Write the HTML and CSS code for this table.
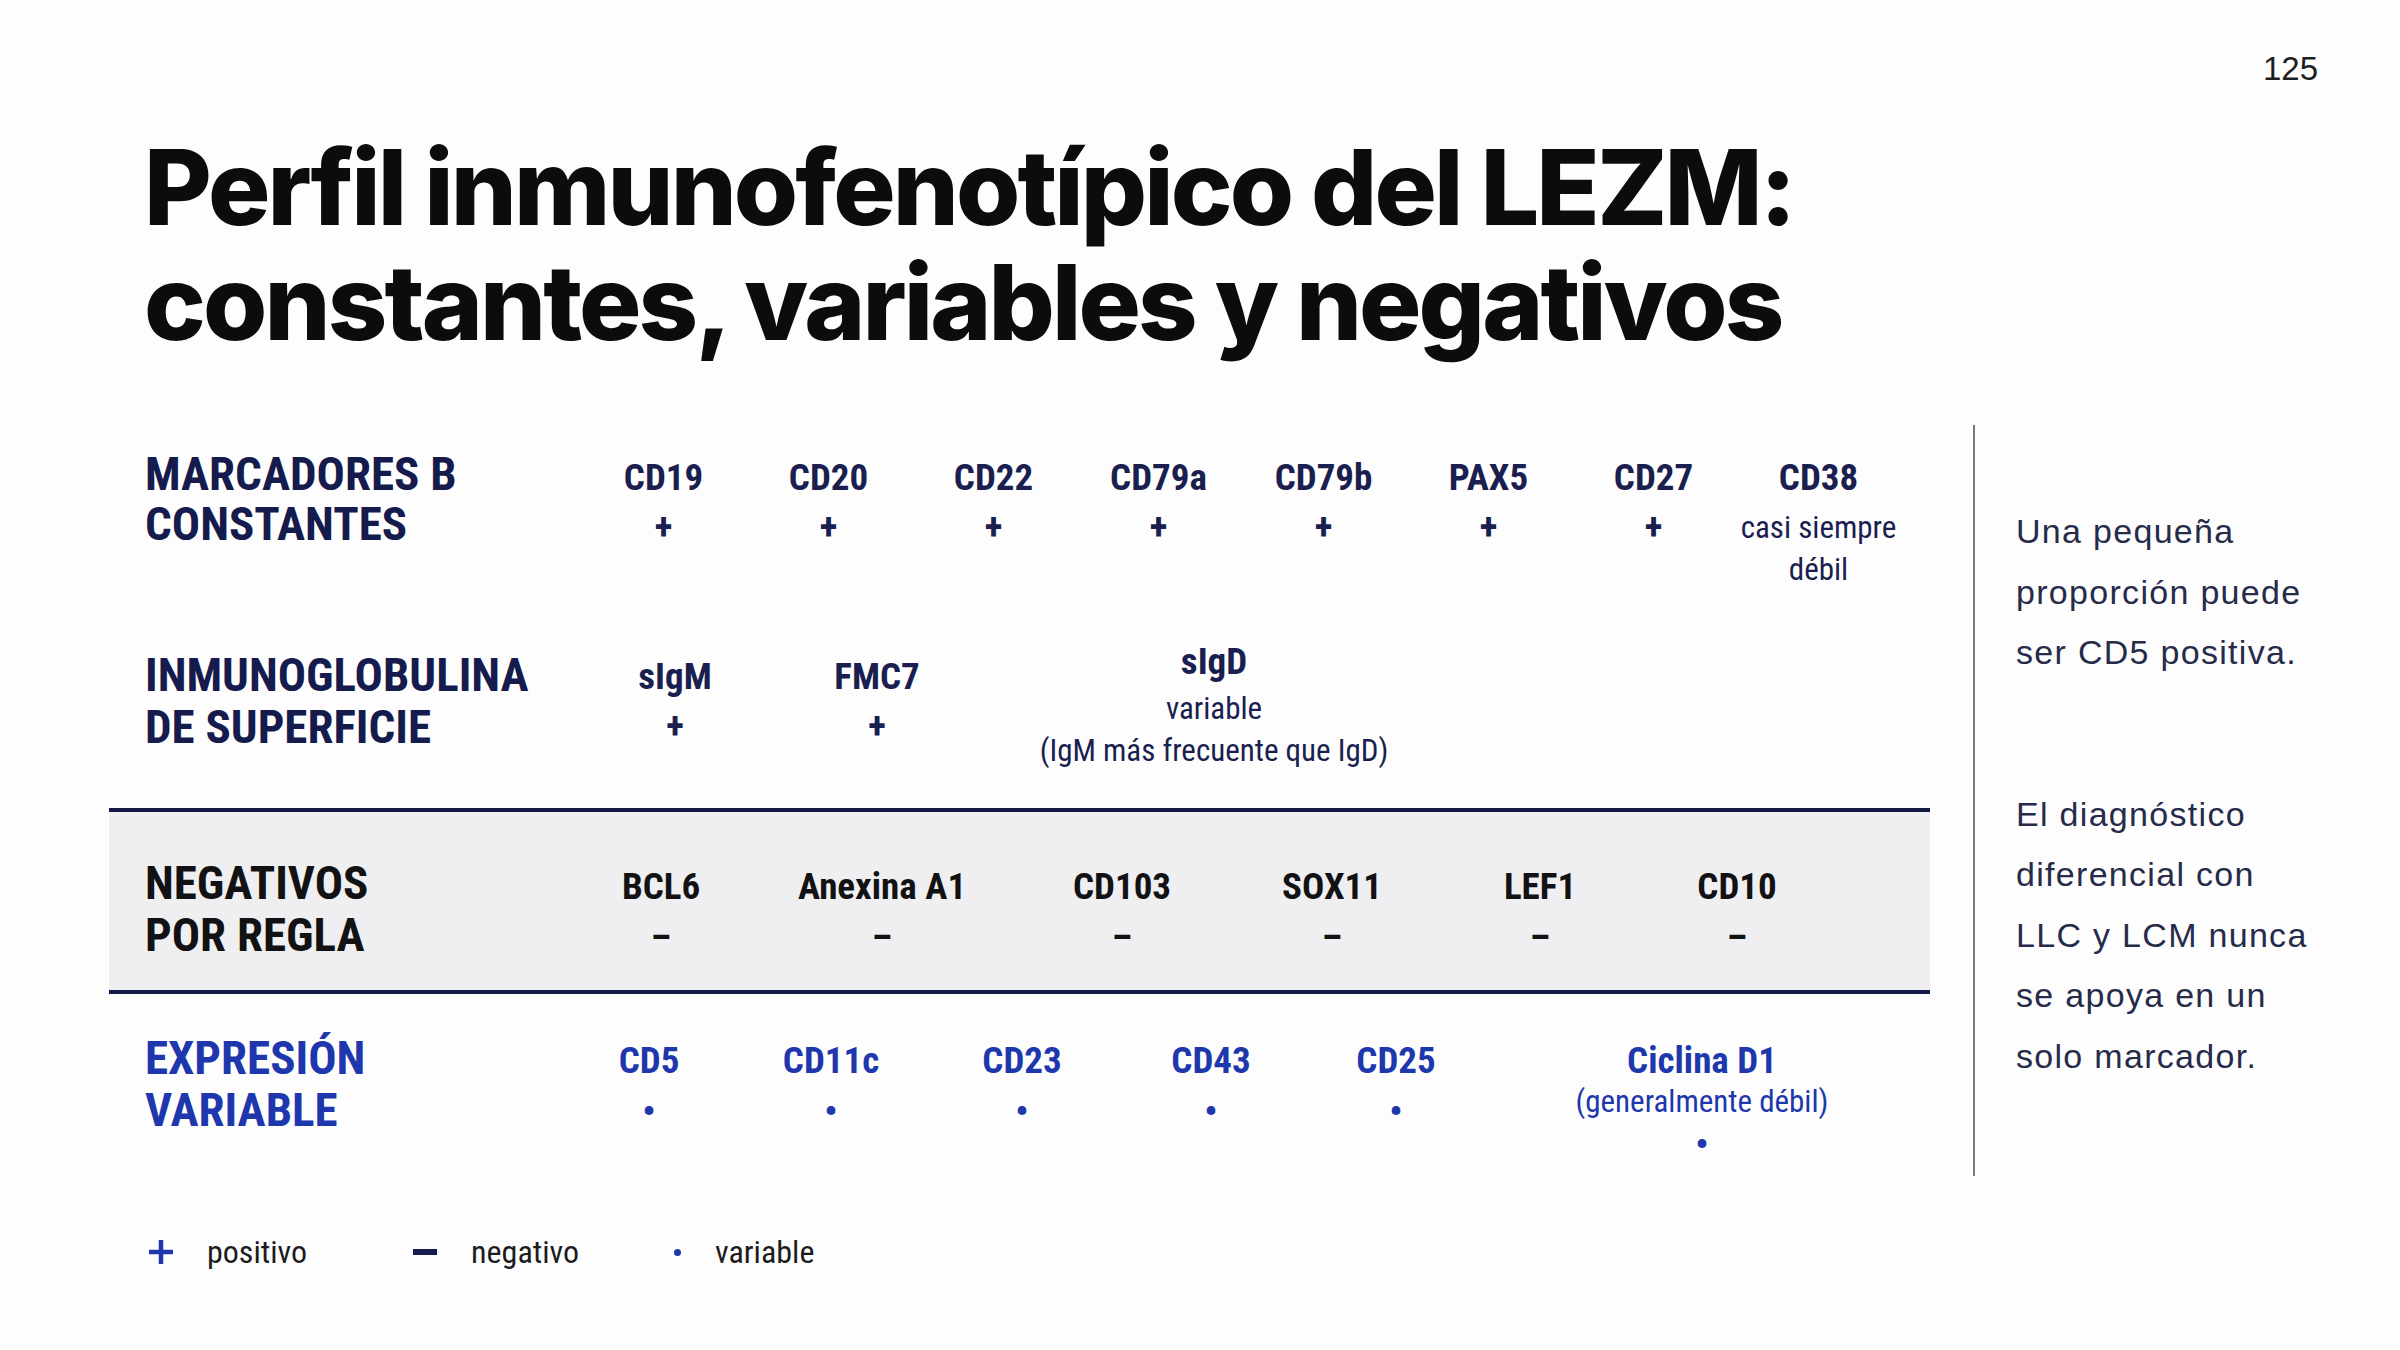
FILE: index.html
```html
<!DOCTYPE html>
<html lang="es">
<head>
<meta charset="utf-8">
<title>Perfil inmunofenotípico del LEZM</title>
<link rel="stylesheet" href="styles.css">
</head>
<body>
<div class="slide">
  <header class="top">
    <span class="page-num">125</span>
  </header>

  <h1 class="title">Perfil inmunofenotípico del LEZM:<br>constantes, variables y negativos</h1>

  <div class="main">
    <div class="table">
      <div class="row row-const">
        <div class="label">MARCADORES B<br>CONSTANTES</div>
        <div class="cells cells-const">
          <div class="cell"><div class="name">CD19</div><div class="val">+</div></div>
          <div class="cell"><div class="name">CD20</div><div class="val">+</div></div>
          <div class="cell"><div class="name">CD22</div><div class="val">+</div></div>
          <div class="cell"><div class="name">CD79a</div><div class="val">+</div></div>
          <div class="cell"><div class="name">CD79b</div><div class="val">+</div></div>
          <div class="cell"><div class="name">PAX5</div><div class="val">+</div></div>
          <div class="cell"><div class="name">CD27</div><div class="val">+</div></div>
          <div class="cell"><div class="name">CD38</div><div class="sub">casi siempre</div><div class="sub">débil</div></div>
        </div>
      </div>

      <div class="row row-ig">
        <div class="label">INMUNOGLOBULINA<br>DE SUPERFICIE</div>
        <div class="cells cells-ig">
          <div class="cell"><div class="name">sIgM</div><div class="val">+</div></div>
          <div class="cell"><div class="name">FMC7</div><div class="val">+</div></div>
          <div class="cell cell-igd"><div class="name">sIgD</div><div class="sub">variable</div><div class="sub">(IgM más frecuente que IgD)</div></div>
        </div>
      </div>

      <div class="row row-neg">
        <div class="label">NEGATIVOS<br>POR REGLA</div>
        <div class="cells cells-neg">
          <div class="cell"><div class="name">BCL6</div><div class="val">–</div></div>
          <div class="cell"><div class="name">Anexina A1</div><div class="val">–</div></div>
          <div class="cell"><div class="name">CD103</div><div class="val">–</div></div>
          <div class="cell"><div class="name">SOX11</div><div class="val">–</div></div>
          <div class="cell"><div class="name">LEF1</div><div class="val">–</div></div>
          <div class="cell"><div class="name">CD10</div><div class="val">–</div></div>
        </div>
      </div>

      <div class="row row-var">
        <div class="label">EXPRESIÓN<br>VARIABLE</div>
        <div class="cells cells-var">
          <div class="cell"><div class="name">CD5</div><div class="val">•</div></div>
          <div class="cell"><div class="name">CD11c</div><div class="val">•</div></div>
          <div class="cell"><div class="name">CD23</div><div class="val">•</div></div>
          <div class="cell"><div class="name">CD43</div><div class="val">•</div></div>
          <div class="cell"><div class="name">CD25</div><div class="val">•</div></div>
          <div class="cell"><div class="name">Ciclina D1</div><div class="sub tight">(generalmente débil)</div><div class="val">•</div></div>
        </div>
      </div>
    </div>

    <div class="divider"></div>

    <aside class="notes">
      <p>Una pequeña<br>proporción puede<br>ser CD5 positiva.</p>
      <p>El diagnóstico<br>diferencial con<br>LLC y LCM nunca<br>se apoya en un<br>solo marcador.</p>
    </aside>
  </div>

  <div class="legend">
    <div class="legend-item">
      <span class="icon"><svg width="26" height="26" viewBox="0 0 26 26"><path d="M13 1v24M1 13h24" stroke="#1e37ad" stroke-width="4.5" fill="none"/></svg></span>
      <span class="legend-text">positivo</span>
    </div>
    <div class="legend-item">
      <span class="icon"><span class="minus"></span></span>
      <span class="legend-text">negativo</span>
    </div>
    <div class="legend-item legend-item-dot">
      <span class="icon icon-small"><span class="dot"></span></span>
      <span class="legend-text">variable</span>
    </div>
  </div>
</div>
</body>
</html>
```

FILE: styles.css
```css
* {
  box-sizing: border-box;
}

html, body {
  margin: 0;
  padding: 0;
  background: #ffffff;
}

.slide {
  width: 2400px;
  height: 1350px;
  padding-top: 53px;
  background: #fdfdfd;
  display: flex;
  flex-direction: column;
  overflow: hidden;
}

.top {
  height: 32px;
  display: flex;
  justify-content: flex-end;
  padding-right: 82px;
}

.page-num {
  font-family: "Liberation Sans", Arial, sans-serif;
  font-size: 33px;
  line-height: 32px;
  color: #1e1e1e;
}

.title {
  margin: 45px 0 0 0;
  padding-left: 144px;
  font-family: Inter, "Liberation Sans", sans-serif;
  font-weight: 800;
  font-size: 104px;
  line-height: 115px;
  letter-spacing: -2.9px;
  color: #0c0c0e;
}

.main {
  margin-top: 65px;
  height: 751px;
  display: flex;
  padding-left: 109px;
}

.table {
  width: 1821px;
  display: flex;
  flex-direction: column;
}

.row {
  flex: none;
  display: flex;
  padding-left: 36px;
  font-family: "Roboto Condensed", Roboto, sans-serif;
  font-stretch: 75%;
}

.label {
  width: 436px;
  flex: none;
  font-weight: 700;
  font-size: 47px;
  line-height: 52px;
  color: #151b4d;
  white-space: nowrap;
}

.cells {
  display: grid;
  text-align: center;
  color: #1a1f4f;
}

.cells-const { grid-template-columns: repeat(8, 165px); }
.cells-ig { grid-template-columns: 188px 216px 458px; }
.cells-neg { grid-template-columns: 160px 282px 198px 222px 194px 200px; }
.cells-var { grid-template-columns: 136px 228px 154px 224px 146px 466px; }

.cell {
  display: flex;
  flex-direction: column;
  align-items: center;
  white-space: nowrap;
}

.name {
  font-weight: 700;
  font-size: 37px;
  line-height: 46px;
}

.val {
  font-weight: 700;
  font-size: 37px;
  line-height: 42px;
  margin-top: 5px;
}

.sub {
  font-weight: 400;
  font-size: 31px;
  line-height: 42px;
}

/* row 1 */
.row-const {
  padding-top: 24px;
  align-items: flex-start;
}
.row-const .label {
  line-height: 50px;
}
.row-const .cell {
  padding-top: 6px;
}
.row-const .name + .sub {
  margin-top: 6px;
}

/* row 2 */
.row-ig {
  margin-top: 38px;
  align-items: center;
}
.row-ig .cells {
  align-items: center;
}
.cell-igd {
  padding-top: 10px;
}
.cell-igd .name + .sub {
  margin-top: 3px;
}

/* row 3 - band */
.row-neg {
  margin-top: 36px;
  height: 186px;
  border-top: 4px solid #131a45;
  border-bottom: 4px solid #131a45;
  background: #efeff1;
  align-items: center;
  padding-top: 16px;
}
.row-neg .label,
.row-neg .cells {
  color: #121214;
}
.row-neg .cells {
  padding-top: 4px;
}
.row-neg .val {
  margin-top: 7px;
}

/* row 4 */
.row-var {
  margin-top: 38px;
  align-items: flex-start;
}
.row-var .label,
.row-var .cells {
  color: #1e37ad;
}
.row-var .cell {
  padding-top: 6px;
}
.row-var .val {
  margin-top: 7px;
}
.row-var .sub.tight {
  margin-top: -3px;
}
.row-var .sub + .val {
  margin-top: 1px;
}

.divider {
  width: 2px;
  flex: none;
  margin-left: 43px;
  background: #7a7a7a;
}

.notes {
  padding-left: 41px;
  padding-top: 76px;
  font-family: "Liberation Sans", Arial, sans-serif;
  font-size: 34px;
  line-height: 60.5px;
  letter-spacing: 1.3px;
  color: #262b4a;
}

.notes p {
  margin: 0 0 101px 0;
}

.legend {
  margin-top: 56px;
  padding-left: 141px;
  display: flex;
  align-items: center;
  gap: 98px;
  font-family: "Roboto Condensed", Roboto, sans-serif;
  font-stretch: 75%;
}

.legend-item {
  display: flex;
  align-items: center;
  gap: 26px;
}

.legend-item-dot {
  gap: 30px;
  margin-left: -8px;
}

.icon {
  width: 40px;
  height: 40px;
  display: flex;
  align-items: center;
  justify-content: center;
}

.icon-small {
  width: 16px;
}

.minus {
  width: 24px;
  height: 6px;
  background: #151b4d;
}

.dot {
  width: 7px;
  height: 7px;
  border-radius: 50%;
  background: #1e37ad;
}

.legend-text {
  font-size: 32px;
  line-height: 40px;
  color: #1c1c1e;
}
```
